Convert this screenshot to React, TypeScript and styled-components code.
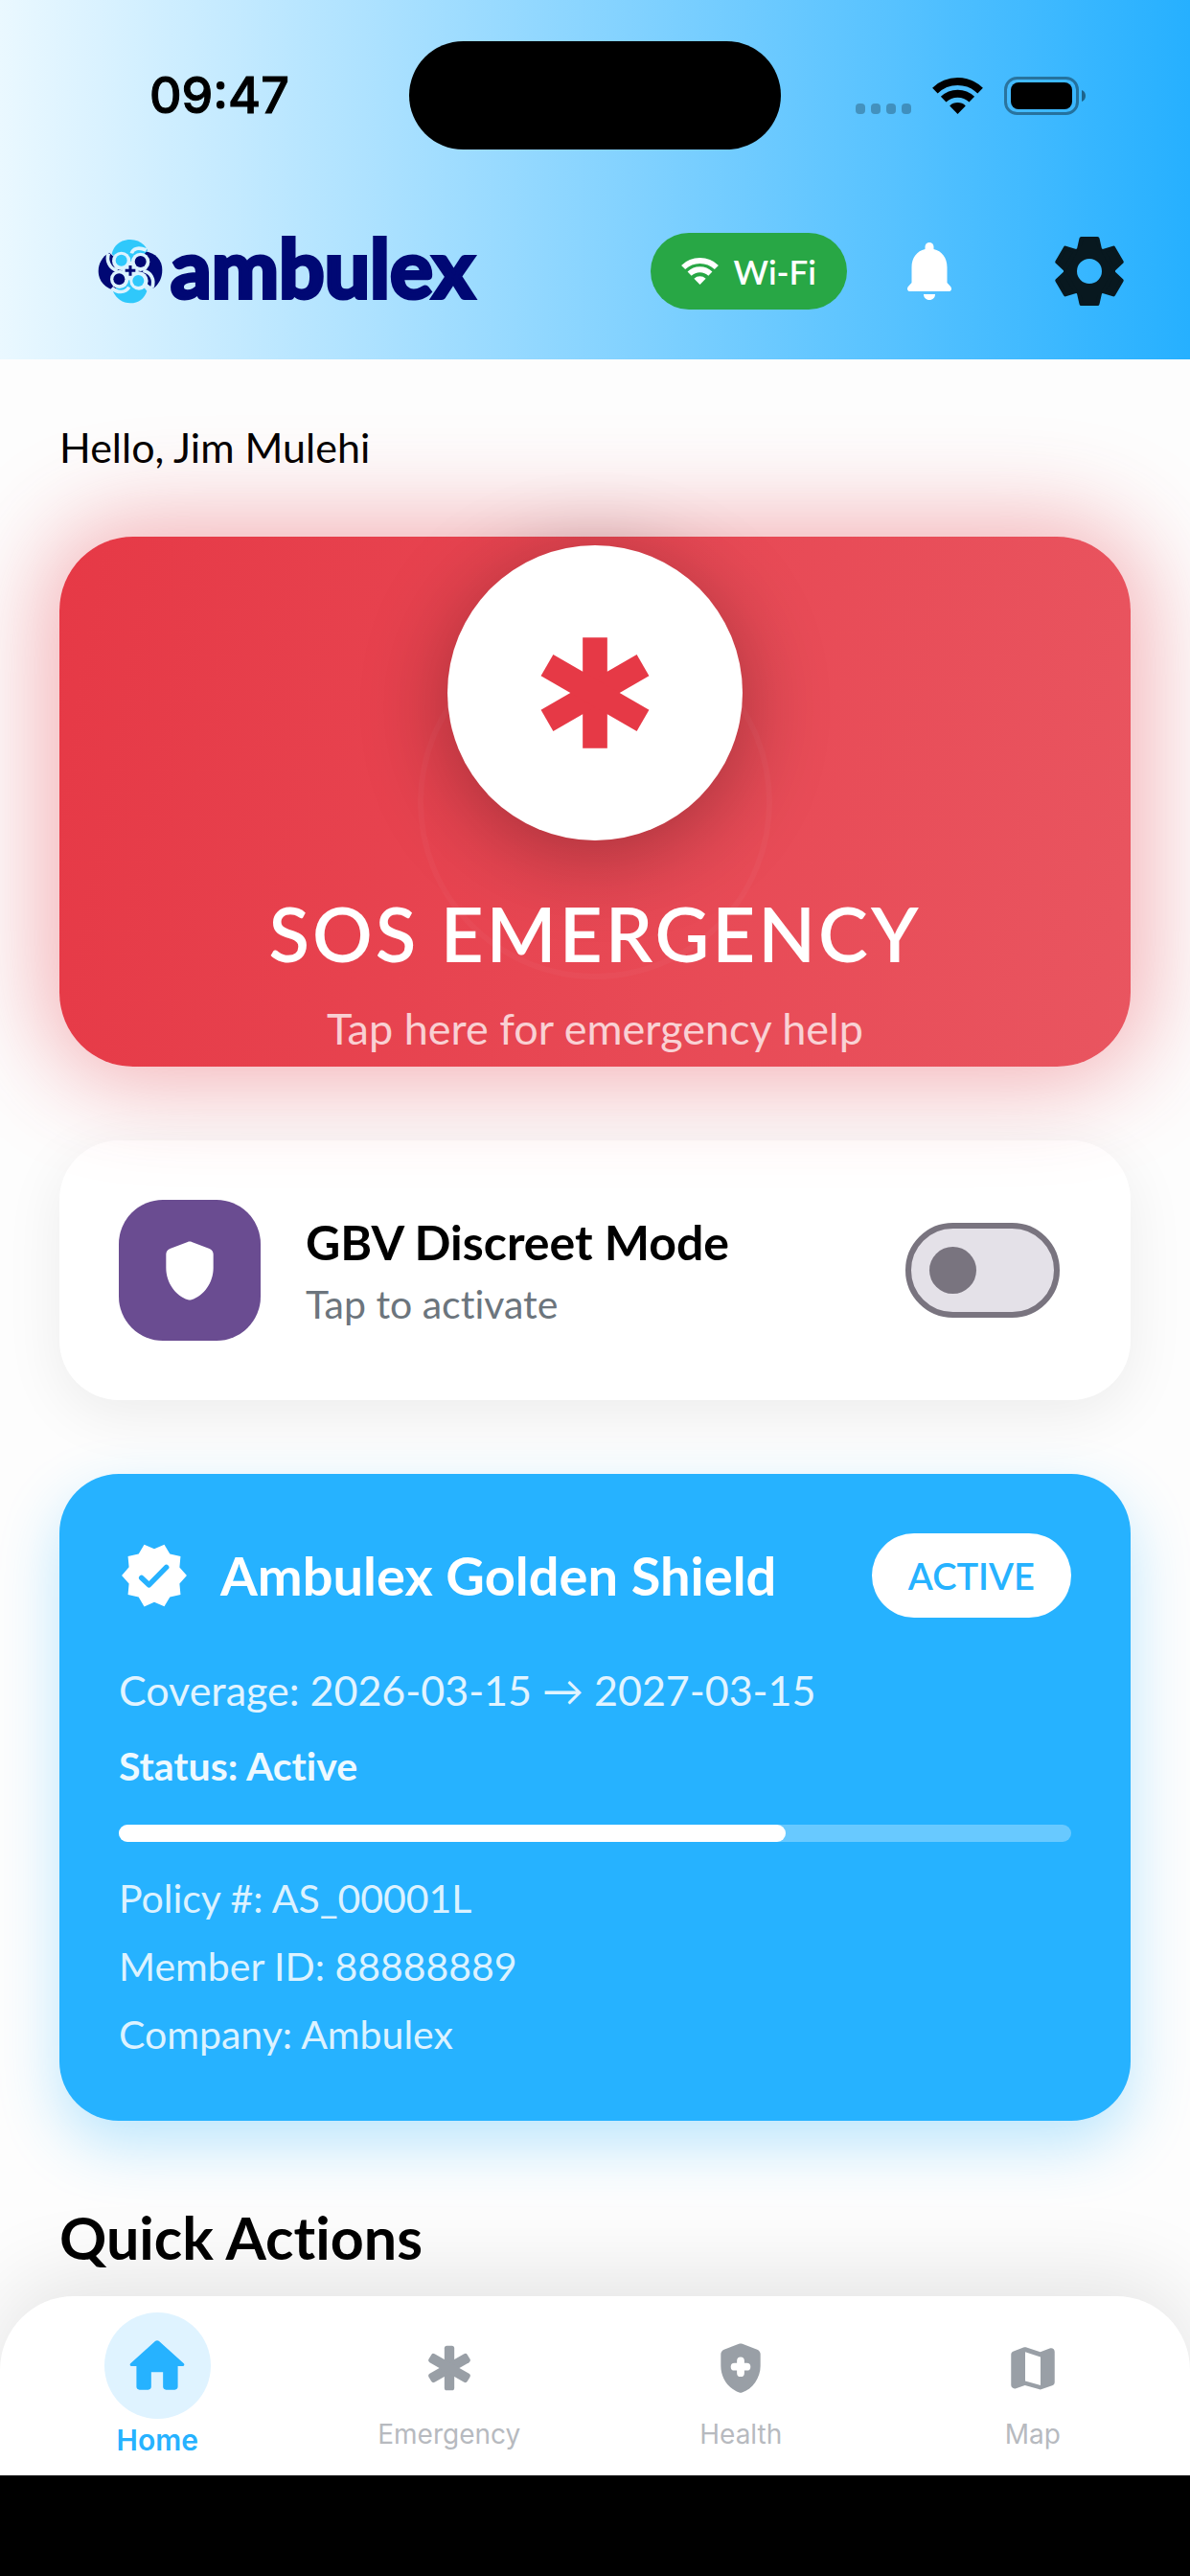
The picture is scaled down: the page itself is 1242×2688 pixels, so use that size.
import React, { useState } from "react";
import styled, { createGlobalStyle } from "styled-components";

const GlobalStyle = createGlobalStyle`
  *, *::before, *::after { box-sizing: border-box; }
  body {
    margin: 0;
    background: #fdfdfd;
    color: #000;
    font-family: Lato, "Liberation Sans", sans-serif;
    font-variant-ligatures: none;
  }
  button { font: inherit; color: inherit; border: 0; padding: 0; cursor: pointer; }
  h2, p { margin: 0; }
  svg { display: block; flex: none; }
`;

const BLUE = "#26b2ff";
const RED = "#e63946";

/* ---------- layout ---------- */

const Screen = styled.div`
  min-height: 100vh;
  display: flex;
  flex-direction: column;
`;

const Header = styled.header`
  background: linear-gradient(90deg, #eaf8ff, #26b0ff);
`;

const StatusBar = styled.div`
  display: grid;
  grid-template-columns: 1fr 388px 1fr;
  align-items: center;
  padding-top: 43px;
`;

const Clock = styled.time`
  padding-left: 156px;
  font: 500 52px/60px Inter, sans-serif;
  -webkit-text-stroke: 1px #000;
`;

const Island = styled.div`
  height: 113px;
  border-radius: 57px;
  background: #000;
`;

const StatusIcons = styled.div`
  display: flex;
  align-items: center;
  justify-content: flex-end;
  gap: 22px;
  padding-right: 108px;
`;

const CellDots = styled.div`
  display: flex;
  gap: 6px;
  margin-top: 28px;
  opacity: 0.25;
`;

const CellDot = styled.i`
  width: 10px;
  height: 11px;
  border-radius: 4px;
  background: #000;
`;

const AppBar = styled.div`
  display: flex;
  align-items: center;
  padding: 87px 31px 52px 102px;
`;

const Brand = styled.div`
  display: flex;
  align-items: center;
  gap: 8px;
  height: 80px;
  margin-right: auto;
  color: #000874;
`;

const BrandName = styled.span`
  padding-bottom: 8px;
  font-size: 84px;
  font-weight: 700;
  line-height: 80px;
  -webkit-text-stroke: 4px #000874;
`;

const NetworkPill = styled.button`
  display: flex;
  align-items: center;
  justify-content: center;
  gap: 16px;
  height: 80px;
  padding: 0 32px;
  margin-right: 12px;
  border-radius: 40px;
  background: #28a745;
  color: #fff;
  font-size: 35px;
  font-weight: 600;
`;

const IconButton = styled.button`
  display: grid;
  place-items: center;
  width: 148px;
  height: 80px;
  background: none;
  & + & { margin-left: 19px; }
`;

const Main = styled.main`
  flex: 1;
  display: flex;
  flex-direction: column;
  padding: 65px 62px 24px;
`;

const Greeting = styled.p`
  margin-bottom: 66px;
  font-size: 43px;
  line-height: 54px;
`;

/* ---------- SOS ---------- */

const SosCard = styled.button`
  position: relative;
  display: flex;
  flex-direction: column;
  align-items: center;
  padding: 9px 0 14px;
  border-radius: 77px;
  background: linear-gradient(100deg, ${RED}, #e95560);
  box-shadow: 0 0 100px 16px rgba(230, 57, 70, 0.4);
  color: #fff;
`;

const PulseRing = styled.span`
  position: absolute;
  top: 50%;
  left: 50%;
  width: 370px;
  height: 370px;
  transform: translate(-50%, -50%);
  border: 6px solid rgba(255, 255, 255, 0.03);
  border-radius: 50%;
`;

const SosDisc = styled.span`
  position: relative;
  display: grid;
  place-items: center;
  width: 308px;
  height: 308px;
  border-radius: 50%;
  background: #fff;
  color: ${RED};
  box-shadow: 0 15px 92px rgba(0, 0, 0, 0.3);
`;

const SosTitle = styled.span`
  position: relative;
  margin-top: 50px;
  font-size: 78px;
  font-weight: 600;
  line-height: 94px;
  letter-spacing: 3px;
`;

const SosHint = styled.span`
  position: relative;
  margin-top: 26px;
  font-size: 45px;
  line-height: 52px;
  color: rgba(255, 255, 255, 0.75);
`;

/* ---------- discreet mode ---------- */

const ModeCard = styled.section`
  display: flex;
  align-items: center;
  margin-top: 77px;
  padding: 62px;
  border-radius: 62px;
  background: #fff;
  box-shadow: 0 15px 62px rgba(0, 0, 0, 0.07);
`;

const ModeTile = styled.div`
  display: grid;
  place-items: center;
  width: 148px;
  height: 147px;
  margin-right: 47px;
  border-radius: 46px;
  background: #6a4c91;
  color: #fff;
`;

const ModeText = styled.label`
  flex: 1;
  display: grid;
  gap: 12px;
`;

const ModeTitle = styled.span`
  font-size: 50px;
  font-weight: 700;
  line-height: 58px;
`;

const ModeHint = styled.span`
  font-size: 41px;
  line-height: 48px;
  color: #6c757d;
`;

const Switch = styled.input`
  appearance: none;
  display: flex;
  align-items: center;
  width: 161px;
  height: 99px;
  margin: 0 12px 0 0;
  padding: 0 19px;
  border: 6px solid #79747f;
  border-radius: 50px;
  background: #e4e1e8;
  &::before {
    content: "";
    width: 49px;
    height: 49px;
    border-radius: 50%;
    background: #79747f;
  }
  &:checked { background: #d9ccea; justify-content: flex-end; }
`;

/* ---------- policy ---------- */

const PolicyCard = styled.section`
  margin-top: 77px;
  padding: 62px 62px 55px;
  border-radius: 62px;
  background: ${BLUE};
  color: #fff;
  box-shadow: 0 25px 62px rgba(38, 178, 255, 0.3);
`;

const PolicyHead = styled.div`
  display: flex;
  align-items: center;
  gap: 32px;
  margin-bottom: 49px;
`;

const PolicyTitle = styled.h2`
  flex: 1;
  font-size: 56px;
  font-weight: 700;
  line-height: 68px;
`;

const StateBadge = styled.span`
  padding: 0 38px;
  border-radius: 46px;
  background: #fff;
  color: ${BLUE};
  font-size: 38px;
  font-weight: 600;
  line-height: 88px;
`;

const Coverage = styled.p`
  margin-bottom: 27px;
  font-size: 43px;
  line-height: 54px;
  color: #e2f4ff;
`;

const Status = styled.p`
  margin-bottom: 36px;
  font-size: 41px;
  font-weight: 700;
  line-height: 50px;
  color: #eef9ff;
`;

const Track = styled.div`
  height: 18px;
  margin-bottom: 23px;
  border-radius: 9px;
  background: #68c9ff;
`;

const Fill = styled.div`
  height: 100%;
  border-radius: 9px;
  background: #fff;
`;

const Detail = styled.p`
  font-size: 41px;
  line-height: 71px;
  color: #dcf2ff;
`;

const SectionTitle = styled.h2`
  margin-top: 85px;
  font-size: 61px;
  font-weight: 700;
  line-height: 74px;
`;

/* ---------- bottom navigation ---------- */

const Nav = styled.nav`
  position: relative;
  display: grid;
  grid-template-columns: repeat(4, 1fr);
  align-items: center;
  height: 187px;
  padding: 0 12px 2px;
  border-radius: 77px 77px 0 0;
  background: #fff;
  box-shadow: 0 -15px 92px rgba(0, 0, 0, 0.11);
`;

const NavItem = styled.a<{ $active?: boolean }>`
  display: flex;
  flex-direction: column;
  align-items: center;
  gap: 4px;
  text-decoration: none;
  font: ${(p) => (p.$active ? "600 30px/36px" : "400 28px/32px")} Inter, sans-serif;
  color: ${(p) => (p.$active ? BLUE : "#b7babf")};
`;

const NavIcon = styled.span<{ $active?: boolean }>`
  display: grid;
  place-items: center;
  width: ${(p) => (p.$active ? 111 : 98)}px;
  height: ${(p) => (p.$active ? 111 : 98)}px;
  border-radius: 50%;
  background: ${(p) => (p.$active ? "#dff3ff" : "transparent")};
  color: ${(p) => (p.$active ? BLUE : "#999fa6")};
`;

const HomeStrip = styled.footer`
  position: relative;
  height: 105px;
  background: #000;
`;

/* ---------- drawings ---------- */

const WifiIcon = ({ width }: { width: number }) => (
  <svg width={width} viewBox="0 0 53 38" fill="none" stroke="currentColor" strokeWidth="8" aria-hidden>
    <path d="M2.9 13.6a34 34 0 0 1 47.2 0" />
    <path d="M11.7 22.7a21.3 21.3 0 0 1 29.6 0" />
    <path d="M26.5 38l-8.3-8.6a12 12 0 0 1 16.6 0z" fill="currentColor" stroke="none" />
  </svg>
);

const BatteryIcon = () => (
  <svg width="86" height="40" viewBox="0 0 86 40" aria-hidden>
    <rect x="1.5" y="1.5" width="75" height="37" rx="12" fill="none" stroke="#000" strokeOpacity=".38" strokeWidth="3" />
    <rect x="7" y="6" width="64" height="28" rx="8" />
    <path d="M81 14c3 1 4 3.5 4 6s-1 5-4 6z" fillOpacity=".45" />
  </svg>
);

const BrandMark = () => (
  <svg width="68" height="68" viewBox="36 60 204 204" aria-hidden>
    <path d="M72 104C50 116 38 138 38 162c0 30 22 56 56 61l44-62z" fill="#000874" />
    <path d="M182 100c36 4 56 28 56 58 0 24-10 44-28 58l-72-55z" fill="#000874" />
    <path d="M80 108c6-28 28-45 58-45 24 0 44 12 54 34l-54 64z" fill="#2fc8fb" />
    <path d="M84 226c10 22 30 36 54 36 26 0 44-14 52-38l-52-64z" fill="#2fc8fb" />
    <g fill="#dcf3ff">
      <circle cx="110" cy="130" r="29" />
      <circle cx="170" cy="133" r="29" />
      <circle cx="104" cy="187" r="29" />
      <circle cx="165" cy="192" r="29" />
      <path d="M112 132h52v58h-52z" />
    </g>
    <g fill="none" stroke="#dcf3ff" strokeWidth="11">
      <path d="M70 106c-8 22 2 48 28 54" />
      <path d="M142 106c4-16 22-20 46-10" />
      <path d="M80 214c16 16 42 18 54-2" />
      <path d="M178 160c24 4 38 28 28 54" />
    </g>
    <circle cx="110" cy="128" r="18" fill="#2fc8fb" />
    <circle cx="170" cy="132" r="18" fill="#000874" />
    <circle cx="103" cy="187" r="18" fill="#000874" />
    <circle cx="163" cy="192" r="18" fill="#2fc8fb" />
    <path d="M138 144v32M122 160h32" stroke="#000874" strokeWidth="9" />
  </svg>
);

const BellIcon = () => (
  <svg width="46" height="60" viewBox="0 0 46 60" fill="#fff" aria-hidden>
    <path d="M23 0a4.5 4.5 0 0 1 4.5 4.5v2.6C36 9 41.5 16 41.5 26v16l3.6 4c2 2.4.5 5-2 5H2.9c-2.5 0-4-2.6-2-5l3.6-4V26C4.5 16 10 9 18.5 7.1V4.5A4.5 4.5 0 0 1 23 0z" />
    <path d="M17 54h12c0 3.5-2.5 6-6 6s-6-2.5-6-6z" />
  </svg>
);

const GearIcon = () => (
  <svg width="72" height="72" viewBox="-36 -36 72 72" fill="#08181f" stroke="#08181f" aria-hidden>
    <circle r="20" fill="none" strokeWidth="14" />
    {[0, 60, 120, 180, 240, 300].map((a) => (
      <path key={a} transform={`rotate(${a})`} d="M-8.5-34H8.5L11-23H-11z" strokeWidth="4" strokeLinejoin="round" />
    ))}
  </svg>
);

const AsteriskIcon = ({ size, round = 0 }: { size: number; round?: number }) => (
  <svg width={size} height={size} viewBox="0 0 24 24" fill="currentColor" aria-hidden>
    {[0, 60, 120].map((a) => (
      <rect key={a} x="10" y="3" width="4" height="18" rx={round} transform={`rotate(${a} 12 12)`} />
    ))}
  </svg>
);

const SHIELD =
  "M11.3 2.26l-6 2.25C4.52 4.81 4 5.55 4 6.39v4.7c0 4.83 3.13 9.37 7.43 10.75.37.12.77.12 1.14 0 4.3-1.38 7.43-5.92 7.43-10.75v-4.7c0-.83-.52-1.58-1.3-1.87l-6-2.25c-.45-.17-.95-.17-1.4-.01z";

const ShieldIcon = ({ size, cross }: { size: number; cross?: boolean }) => (
  <svg width={size} height={size} viewBox="0 0 24 24" fill="currentColor" aria-hidden>
    <path d={SHIELD} />
    {cross && <path d="M12 9v5M9.5 11.5h5" stroke="#fff" strokeWidth="3" strokeLinecap="round" />}
  </svg>
);

const VerifiedIcon = () => (
  <svg width="74" height="74" viewBox="0 0 24 24" aria-hidden>
    <path
      fill="#fff"
      d="M23 12l-2.44-2.79.34-3.69-3.61-.82-1.89-3.2L12 2.96 8.6 1.5 6.71 4.69 3.1 5.5l.34 3.7L1 12l2.44 2.79-.34 3.7 3.61.82L8.6 22.5l3.4-1.47 3.4 1.46 1.89-3.19 3.61-.82-.34-3.69z"
    />
    <path d="M7.7 12.8l2.5 2.4 5.9-6" fill="none" stroke={BLUE} strokeWidth="1.8" strokeLinecap="round" strokeLinejoin="round" />
  </svg>
);

const HomeIcon = () => (
  <svg width="74" height="74" viewBox="0 0 24 24" fill="currentColor" aria-hidden>
    <path d="M10 19v-5h4v5c0 .55.45 1 1 1h3c.55 0 1-.45 1-1v-7h1.7c.46 0 .68-.57.33-.87L12.67 3.6c-.38-.34-.96-.34-1.34 0l-8.36 7.53c-.34.3-.13.87.33.87H5v7c0 .55.45 1 1 1h3c.55 0 1-.45 1-1z" />
  </svg>
);

const MapIcon = () => (
  <svg width="62" height="62" viewBox="0 0 24 24" fill="currentColor" fillRule="evenodd" aria-hidden>
    <path d="M8.2 3.7c.45-.17.8-.17 1.25 0L15 5.5l3.8-1.4c1-.4 2 .2 2 1.3v12.3c0 .7-.4 1.1-1 1.35l-4.2 1.5c-.4.15-.8.15-1.2 0L8.8 19l-3.6 1.2c-1 .4-2-.3-2-1.3V6.6c0-.7.4-1.1 1-1.35zM8.9 5.5V17.2L15.1 19V7.5z" />
  </svg>
);

/* ---------- page ---------- */

const policy = { term: 70, number: "AS_00001L", member: "88888889", company: "Ambulex" };

const tabs = [
  { name: "Home", icon: <HomeIcon /> },
  { name: "Emergency", icon: <AsteriskIcon size={62} round={1} /> },
  { name: "Health", icon: <ShieldIcon size={62} cross /> },
  { name: "Map", icon: <MapIcon /> },
];

export default function App() {
  const [discreet, setDiscreet] = useState(false);
  return (
    <>
      <GlobalStyle />
      <Screen>
        <Header>
          <StatusBar>
            <Clock>09:47</Clock>
            <Island />
            <StatusIcons>
              <CellDots>
                <CellDot />
                <CellDot />
                <CellDot />
                <CellDot />
              </CellDots>
              <WifiIcon width={53} />
              <BatteryIcon />
            </StatusIcons>
          </StatusBar>
          <AppBar>
            <Brand>
              <BrandMark />
              <BrandName>ambulex</BrandName>
            </Brand>
            <NetworkPill>
              <WifiIcon width={39} />
              Wi-Fi
            </NetworkPill>
            <IconButton aria-label="Notifications">
              <BellIcon />
            </IconButton>
            <IconButton aria-label="Settings">
              <GearIcon />
            </IconButton>
          </AppBar>
        </Header>

        <Main>
          <Greeting>Hello, Jim Mulehi</Greeting>

          <SosCard>
            <PulseRing />
            <SosDisc>
              <AsteriskIcon size={154} />
            </SosDisc>
            <SosTitle>SOS EMERGENCY</SosTitle>
            <SosHint>Tap here for emergency help</SosHint>
          </SosCard>

          <ModeCard>
            <ModeTile>
              <ShieldIcon size={74} />
            </ModeTile>
            <ModeText htmlFor="discreet">
              <ModeTitle>GBV Discreet Mode</ModeTitle>
              <ModeHint>Tap to activate</ModeHint>
            </ModeText>
            <Switch
              id="discreet"
              type="checkbox"
              role="switch"
              checked={discreet}
              onChange={(e) => setDiscreet(e.target.checked)}
            />
          </ModeCard>

          <PolicyCard>
            <PolicyHead>
              <VerifiedIcon />
              <PolicyTitle>Ambulex Golden Shield</PolicyTitle>
              <StateBadge>ACTIVE</StateBadge>
            </PolicyHead>
            <Coverage>Coverage: 2026-03-15 → 2027-03-15</Coverage>
            <Status>Status: Active</Status>
            <Track>
              <Fill style={{ width: `${policy.term}%` }} />
            </Track>
            <Detail>Policy #: {policy.number}</Detail>
            <Detail>Member ID: {policy.member}</Detail>
            <Detail>Company: {policy.company}</Detail>
          </PolicyCard>

          <SectionTitle>Quick Actions</SectionTitle>
        </Main>

        <Nav>
          {tabs.map((tab, i) => (
            <NavItem key={tab.name} href={`#${tab.name.toLowerCase()}`} $active={i === 0}>
              <NavIcon $active={i === 0}>{tab.icon}</NavIcon>
              {tab.name}
            </NavItem>
          ))}
        </Nav>
        <HomeStrip />
      </Screen>
    </>
  );
}
